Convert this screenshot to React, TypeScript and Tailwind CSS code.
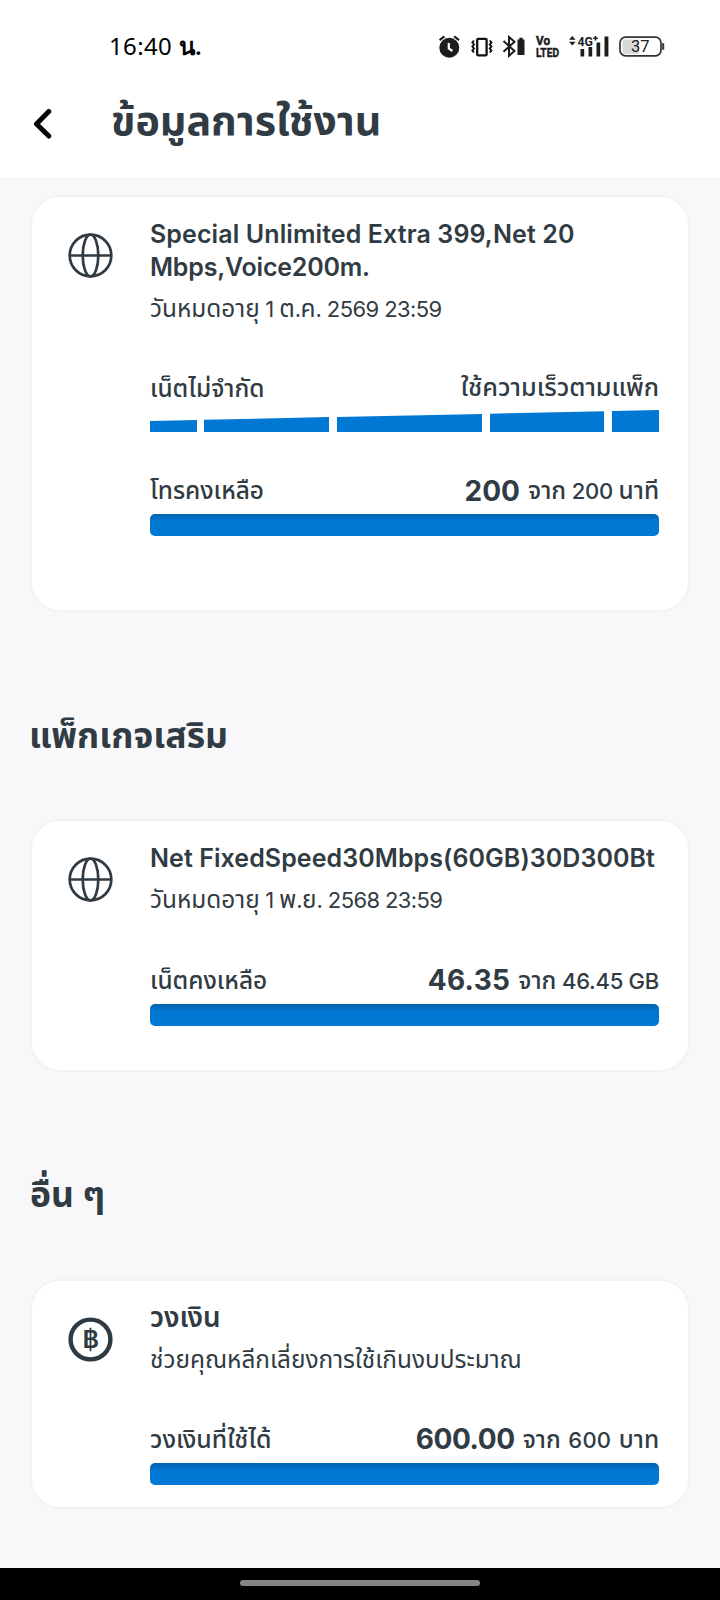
import { ReactNode } from 'react';
import clsx from 'clsx';

interface UsageRow {
  label: string;
  labelClass?: string;
  remaining?: string;
  remainingClass?: string;
  total: string;
  totalClass?: string;
  unlimited?: boolean;
}

interface UsageCardProps {
  icon: ReactNode;
  title: ReactNode;
  subtitle: string;
  rows: UsageRow[];
  className?: string;
}

// Thai runs are set a little larger than the Latin text beside them
const MixedText = ({ text }: { text: string }) => (
  <>
    {text.split(/([\u0e00-\u0e7f]+)/).map((part, index) =>
      index % 2 === 1 ? (
        <span key={index} className="text-[1.11em] tracking-normal">
          {part}
        </span>
      ) : (
        part
      )
    )}
  </>
);

const GlobeIcon = () => (
  <svg width="46" height="46" viewBox="0 0 46 46" fill="none" stroke="#2f3a43" strokeWidth="2.7">
    <circle cx="22.5" cy="22.5" r="20.8" />
    <ellipse cx="22.5" cy="22.5" rx="7.8" ry="20.8" />
    <path d="M1.5 22.5h42" />
  </svg>
);

const BahtIcon = () => (
  <svg width="46" height="46" viewBox="0 0 46 46" fill="none">
    <circle cx="22.5" cy="22.5" r="19.9" stroke="#2f3a43" strokeWidth="4.4" />
    <text x="14.6" y="31.3" fontFamily="Inter" fontSize="24" fontWeight="600" fill="#2f3a43" textLength="16.5" lengthAdjust="spacingAndGlyphs">
      B
    </text>
    <path d="M22.5 10.8v23.4" stroke="#2f3a43" strokeWidth="1.8" />
  </svg>
);

const StatusIcons = () => (
  <div className="mt-0.5 flex">
    <svg width="23" height="24" viewBox="0 0 23 24" fill="none">
      <circle cx="11.3" cy="12.8" r="10" fill="#1d1d1d" />
      <path d="M1.6 5.2l4.8-3.8M21 5.2l-4.8-3.8" stroke="#1d1d1d" strokeWidth="2.2" />
      <path d="M10.8 8v5.4l3.6 2.6" stroke="#fff" strokeWidth="2.2" />
    </svg>
    <svg className="ml-[10px]" width="22" height="24" viewBox="0 0 22 24" fill="none" stroke="#111">
      <rect x="6.2" y="3.8" width="9.4" height="16.6" rx="1" strokeWidth="2.3" />
      <path d="M3 5.5L1.4 7.5L3 9.5L1.4 11.5L3 13.5L1.4 15.5L3 17.5M18.8 5.5L20.4 7.5L18.8 9.5L20.4 11.5L18.8 13.5L20.4 15.5L18.8 17.5" strokeWidth="2" />
    </svg>
    <svg className="ml-[9px]" width="23" height="24" viewBox="0 0 23 24" fill="none">
      <path d="M1.5 6L12.5 16L7 20.8V2L12.5 6.8L1.5 16.8" stroke="#1d1d1d" strokeWidth="2" />
      <path d="M15.5 4.5h1.8V2.8h3.4v1.7h1.8V20h-7z" fill="#1d1d1d" />
    </svg>
    <svg className="ml-[10px] overflow-visible" width="26" height="24" viewBox="0 0 26 24" fill="#1d1d1d" stroke="#1d1d1d" strokeWidth="0.5" fontFamily="Roboto" fontWeight="700" fontSize="13">
      <text x="1" y="10" textLength="14" lengthAdjust="spacingAndGlyphs">Vo</text>
      <text x="1" y="21.5" textLength="23" lengthAdjust="spacingAndGlyphs">LTED</text>
    </svg>
    <svg className="ml-[7px]" width="41" height="24" viewBox="0 0 41 24" fill="#1d1d1d">
      <path d="M1 4.8L4.3 1l3.3 3.8zM1 6.8L4.3 10.4l3.3-3.6z" />
      <path d="M12.5 14h3.7v7.5h-3.7zM20.5 12h3.7v9.5h-3.7zM28.5 7.5h3.7v14h-3.7zM36.5 1.5h3.9v20h-3.9z" />
      <text x="9.5" y="10.5" fontFamily="Roboto" fontWeight="700" fontSize="12.5" textLength="15.5" lengthAdjust="spacingAndGlyphs">4G</text>
      <path d="M25.2 3.3h4.6M27.5 1v4.6" stroke="#1d1d1d" strokeWidth="1.6" />
    </svg>
    <svg className="ml-[9px]" width="47" height="24" viewBox="0 0 47 24" fill="none">
      <path d="M7 4.5h14V19H7a2.5 2.5 0 0 1-2.5-2.5V7A2.5 2.5 0 0 1 7 4.5z" fill="#d8d8d8" />
      <rect x="2" y="2.2" width="41" height="18.6" rx="5.5" stroke="#333" strokeWidth="1.7" />
      <path d="M45.2 8.2v6.5" stroke="#333" strokeWidth="2" />
      <text x="13" y="17" fontFamily="Roboto" fontSize="16" fill="#222" textLength="18.5" lengthAdjust="spacingAndGlyphs">37</text>
    </svg>
  </div>
);

// Five blocks that grow from left to right
const UnlimitedBar = () => (
  <svg className="mt-[7px] block" width="509" height="22" viewBox="0 0 509 22" fill="#0078d4">
    <path d="M0 11L47 10V22H0zM54 9.8L179 7.1V22H54zM187 7L332 3.9V22H187zM340 3.7L454 1.2V22H340zM462 1L509 0V22H462z" />
  </svg>
);

const ProgressBar = () => (
  <div className="mt-2 h-[22px] rounded-[5px] bg-linear-to-b from-[#0063ae] to-[#0078d4] to-35%" />
);

const UsageCard = ({ icon, title, subtitle, rows, className }: UsageCardProps) => (
  <section className={clsx('flex rounded-[30px] border-2 border-[#f2f2f4] bg-white pt-[21px] pl-9', className)}>
    <div className="mt-[15px] w-[82px] shrink-0">{icon}</div>
    <div className="w-[509px]">
      <h3 className="text-[25px] leading-[33px] font-semibold whitespace-nowrap">{title}</h3>
      <p className="mt-2 h-8 text-[22px] leading-8 tracking-[-0.6px] whitespace-nowrap">
        <MixedText text={subtitle} />
      </p>
      <div className="mt-[47px] flex flex-col gap-[42px]">
        {rows.map((row) => (
          <div key={row.label}>
            <div className="flex h-8 justify-between text-[22px] leading-8 font-medium tracking-[-0.25px] whitespace-nowrap">
              <span className={row.labelClass}>
                <MixedText text={row.label} />
              </span>
              <span className="flex items-start">
                {row.remaining && (
                  <strong className={clsx('mr-2 text-[28px] leading-8 font-bold', row.remainingClass)}>{row.remaining}</strong>
                )}
                <span className={row.totalClass}>
                  <MixedText text={row.total} />
                </span>
              </span>
            </div>
            {row.unlimited ? <UnlimitedBar /> : <ProgressBar />}
          </div>
        ))}
      </div>
    </div>
  </section>
);

export default function App() {
  return (
    <div className="flex h-[1600px] w-[720px] flex-col overflow-hidden bg-[#f8f8fb] font-[Inter,'Noto_Sans_Thai',sans-serif] text-[#313b43]">
      <header className="h-[177px] shrink-0 bg-white">
        <div className="flex h-[91px] items-center justify-between pr-[55px] pl-[109px]">
          <span className="font-['Noto_Sans',sans-serif] text-[24px] tracking-[0.35px] text-black">
            16:40 <span className="font-semibold">น.</span>
          </span>
          <StatusIcons />
        </div>
        <div className="flex h-[66px] items-center pl-[33px]">
          <svg width="20" height="30" viewBox="0 0 20 30" fill="none" stroke="#050505" strokeWidth="5" strokeLinecap="round" strokeLinejoin="round">
            <path d="M15.8 2.5L3.5 15l12.3 12" />
          </svg>
          <h1 className="-mt-2 ml-[58px] text-[41.2px] leading-[60px] font-bold">ข้อมูลการใช้งาน</h1>
        </div>
      </header>

      <main className="flex-1 px-[30px] pt-[18px]">
        <UsageCard
          className="h-[417px]"
          icon={<GlobeIcon />}
          title={
            <>
              <span className="block tracking-[0.1px]">Special Unlimited Extra 399,Net 20</span>
              <span className="block tracking-[-0.2px]">Mbps,Voice200m.</span>
            </>
          }
          subtitle="วันหมดอายุ 1 ต.ค. 2569 23:59"
          rows={[
            { label: 'เน็ตไม่จำกัด', labelClass: 'mt-px', total: 'ใช้ความเร็วตามแพ็ก', totalClass: 'text-[22.7px]', unlimited: true },
            { label: 'โทรคงเหลือ', remaining: '200', remainingClass: 'tracking-normal mt-px', total: 'จาก 200 นาที' },
          ]}
        />
        <h2 className="mt-[100px] -ml-px h-[48px] text-[35.5px] leading-[48px] font-bold">แพ็กเกจเสริม</h2>
        <UsageCard
          className="mt-[59px] h-[253px] [&_p]:mb-[49px]"
          icon={<GlobeIcon />}
          title={<span className="tracking-[0.07px]">Net FixedSpeed30Mbps(60GB)30D300Bt</span>}
          subtitle="วันหมดอายุ 1 พ.ย. 2568 23:59"
          rows={[{ label: 'เน็ตคงเหลือ', remaining: '46.35', remainingClass: 'tracking-[0.3px]', total: 'จาก 46.45 GB' }]}
        />
        <h2 className="mt-[99px] h-[48px] text-[35.5px] leading-[48px] font-bold">อื่น ๆ</h2>
        <UsageCard
          className="mt-[60px] h-[230px] [&_h3]:-mt-px [&_h3]:h-[34px] [&_p]:mb-[48px]"
          icon={<BahtIcon />}
          title={<MixedText text="วงเงิน" />}
          subtitle="ช่วยคุณหลีกเลี่ยงการใช้เกินงบประมาณ"
          rows={[
            {
              label: 'วงเงินที่ใช้ได้',
              labelClass: 'text-[22.4px]',
              remaining: '600.00',
              remainingClass: 'tracking-[-0.4px]',
              total: 'จาก 600 บาท',
              totalClass: 'tracking-[0.2px] [word-spacing:1.5px]',
            },
          ]}
        />
      </main>

      <footer className="flex h-8 shrink-0 justify-center bg-black pt-3">
        <div className="h-1.5 w-60 rounded-full bg-[#858585]" />
      </footer>
    </div>
  );
}
